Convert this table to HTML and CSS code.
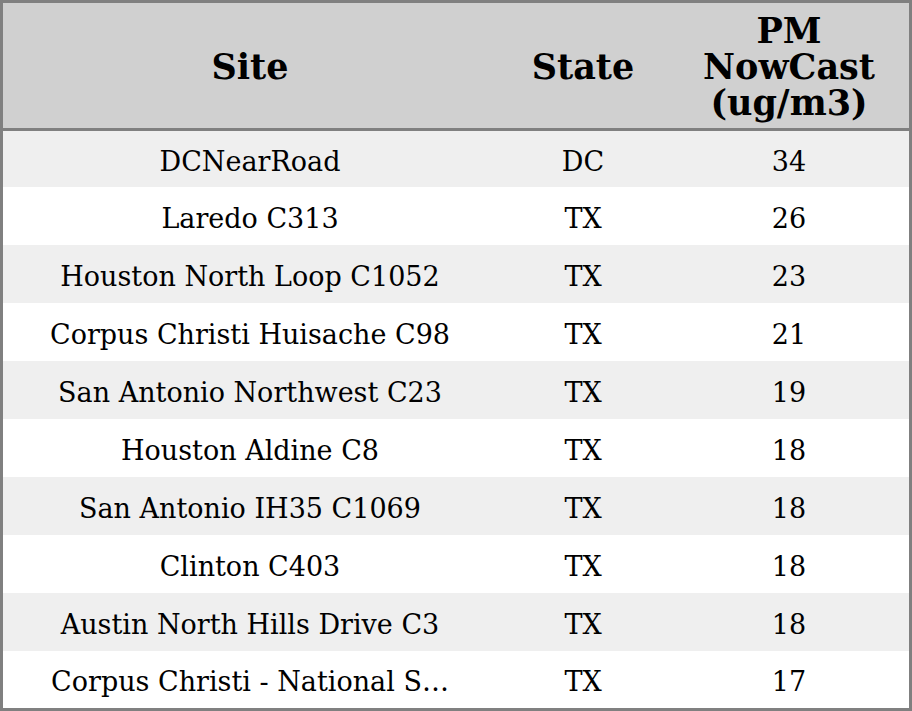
FILE: index.html
```html
<!DOCTYPE html>
<html>
<head>
<meta charset="utf-8">
<link rel="stylesheet" href="styles.css">
</head>
<body>
<div class="table">
  <div class="head">
    <div class="hcell">Site</div>
    <div class="hcell">State</div>
    <div class="hcell">PM<br>NowCast<br>(ug/m3)</div>
  </div>
  <div class="body">
    <div class="row"><div class="cell">DCNearRoad</div><div class="cell">DC</div><div class="cell">34</div></div>
    <div class="row"><div class="cell">Laredo C313</div><div class="cell">TX</div><div class="cell">26</div></div>
    <div class="row"><div class="cell">Houston North Loop C1052</div><div class="cell">TX</div><div class="cell">23</div></div>
    <div class="row"><div class="cell">Corpus Christi Huisache C98</div><div class="cell">TX</div><div class="cell">21</div></div>
    <div class="row"><div class="cell">San Antonio Northwest C23</div><div class="cell">TX</div><div class="cell">19</div></div>
    <div class="row"><div class="cell">Houston Aldine C8</div><div class="cell">TX</div><div class="cell">18</div></div>
    <div class="row"><div class="cell">San Antonio IH35 C1069</div><div class="cell">TX</div><div class="cell">18</div></div>
    <div class="row"><div class="cell">Clinton C403</div><div class="cell">TX</div><div class="cell">18</div></div>
    <div class="row"><div class="cell">Austin North Hills Drive C3</div><div class="cell">TX</div><div class="cell">18</div></div>
    <div class="row"><div class="cell">Corpus Christi - National S…</div><div class="cell">TX</div><div class="cell">17</div></div>
  </div>
</div>
</body>
</html>
```
FILE: styles.css
```css
html, body {
  margin: 0;
  padding: 0;
  background: #ffffff;
}
.table {
  width: 912px;
  height: 711px;
  box-sizing: border-box;
  border: 3px solid #808080;
  font-family: "DejaVu Serif", serif;
  color: #000;
  overflow: hidden;
}
.head, .row {
  display: grid;
  grid-template-columns: 494px 172px 240px;
}
.head {
  height: 125px;
  background: #d0d0d0;
  border-bottom: 3px solid #808080;
}
.hcell {
  display: flex;
  align-items: center;
  justify-content: center;
  text-align: center;
  font-weight: bold;
  font-size: 35px;
  line-height: 36px;
  padding-top: 3px;
}
.row {
  height: 58px;
}
.row:nth-child(odd) {
  background: #efefef;
}
.row:first-child {
  height: 56px;
}
.row:last-child {
  height: 57px;
}
.cell {
  display: flex;
  align-items: center;
  justify-content: center;
  font-size: 27px;
  white-space: nowrap;
  overflow: hidden;
  padding-top: 4px;
  box-sizing: border-box;
}
```
